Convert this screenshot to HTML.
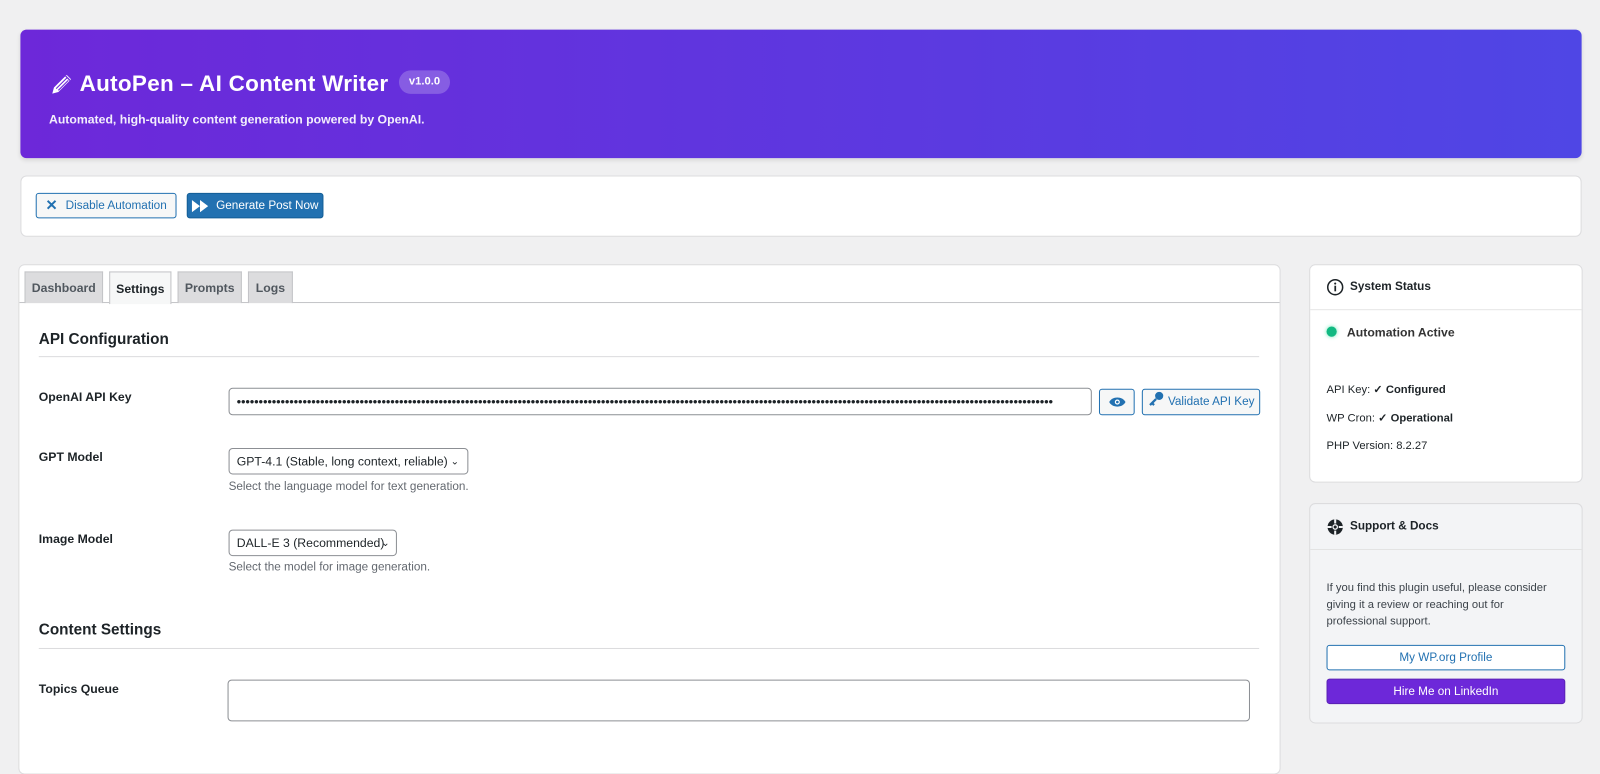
<!DOCTYPE html>
<html><head><meta charset="utf-8"><style>
*{box-sizing:border-box;margin:0;padding:0}
body{width:1600px;height:750px;overflow:hidden;background:#f0f0f1;font-family:"Liberation Sans",sans-serif;color:#1d2327;position:relative}
#w{position:absolute;left:0;top:0;width:1568px;height:735px;transform:scale(1.0204);transform-origin:0 0}
.abs{position:absolute}
.hdr{left:20px;top:29px;width:1530px;height:126px;border-radius:6px;background:linear-gradient(90deg,#6d28d9,#4f46e5);box-shadow:0 2px 4px rgba(0,0,0,.1)}
.title{left:28px;top:40px;color:#fff;font-size:22px;font-weight:bold;display:flex;align-items:center;letter-spacing:.3px}
.badge{left:371px;top:40px;height:23px;width:50px;border-radius:12px;background:rgba(255,255,255,.22);color:#fff;font-size:11px;font-weight:bold;text-align:center;line-height:23px}
.sub{left:28px;top:81px;color:#fff;font-size:12px;font-weight:bold;opacity:.92}
.card{background:#fff;border:1px solid #dcdcde;border-radius:6px}
.btn{position:absolute;height:25px;border-radius:3px;font-size:11.5px;display:flex;align-items:center;justify-content:center;gap:8px}
.tab{position:absolute;top:266px;height:31px;background:#dcdcde;border:1px solid #c3c4c7;border-bottom:none;font-size:12px;font-weight:bold;color:#50575e;display:flex;align-items:center;justify-content:center}
.h2{position:absolute;left:38px;font-size:15px;font-weight:bold}
.hr{position:absolute;left:38px;width:1196px;height:1px;background:#dcdcde}
.lbl{position:absolute;left:38px;font-size:12px;font-weight:bold}
.inp{position:absolute;border:1px solid #8c8f94;border-radius:4px;background:#fff;font-size:12px;display:flex;align-items:center;padding-left:7px}
.desc{position:absolute;left:224px;font-size:11.5px;color:#646970}
.st{position:absolute;left:1300px;font-size:11px}
</style></head><body><div id="w">
<div class="abs hdr">
 <div class="abs title"><svg width="26" height="26" viewBox="0 0 24 24" style="margin-right:4px"><path d="M3 21l1.5-5.5L16 4l4 4L8.5 19.5z" fill="#fff"/><path d="M6.5 16.5l10-10M8.5 18l9-9" stroke="#6d28d9" stroke-width="1"/><path d="M15 5l4 4" stroke="#6d28d9" stroke-width="1.2"/></svg>AutoPen – AI Content Writer</div>
 <div class="abs badge">v1.0.0</div>
 <div class="abs sub">Automated, high-quality content generation powered by OpenAI.</div>
</div>
<div class="abs card" style="left:20px;top:172px;width:1530px;height:60px"></div>
<div class="btn" style="left:35px;top:189px;width:138px;border:1px solid #2271b1;background:#f6f7f7;color:#2271b1"><span style="font-weight:bold;font-size:14px">✕</span>Disable Automation</div>
<div class="btn" style="left:183px;top:189px;width:134px;background:#2271b1;border:1px solid #135e96;color:#fff"><svg width="16" height="12" viewBox="0 0 16 12"><path d="M0 0l8 6-8 6zM8 0l8 6-8 6z" fill="#fff"/></svg>Generate Post Now</div>

<div class="abs card" style="left:18px;top:259px;width:1237px;height:500px"></div>
<div class="abs" style="left:19px;top:296px;width:1235px;height:1px;background:#c3c4c7"></div>
<div class="tab" style="left:24px;width:77px">Dashboard</div>
<div class="tab" style="left:107px;width:61px;background:#f6f7f7;color:#1d2327;height:32px">Settings</div>
<div class="tab" style="left:174px;width:63px">Prompts</div>
<div class="tab" style="left:243px;width:44px">Logs</div>
<div class="h2" style="top:324px">API Configuration</div>
<div class="hr" style="top:349px"></div>
<div class="lbl" style="top:382px">OpenAI API Key</div>
<div class="inp" style="left:224px;top:380px;width:846px;height:27px;letter-spacing:0.1px;font-weight:bold;overflow:hidden;white-space:nowrap">••••••••••••••••••••••••••••••••••••••••••••••••••••••••••••••••••••••••••••••••••••••••••••••••••••••••••••••••••••••••••••••••••••••••••••••••••••••••••••••••••••••••••••••••••••••••••</div>
<div class="btn" style="left:1077px;top:381px;width:35px;border:1px solid #2271b1;background:#f6f7f7;color:#2271b1;height:26px"><svg width="16" height="12" viewBox="0 0 16 12"><path d="M0 6C3 0 13 0 16 6 13 12 3 12 0 6z" fill="#2271b1"/><circle cx="8" cy="6" r="2.5" fill="#fff"/><circle cx="8" cy="6" r="1.3" fill="#2271b1"/></svg></div>
<div class="btn" style="left:1119px;top:381px;width:116px;border:1px solid #2271b1;background:#f6f7f7;color:#2271b1;height:26px;gap:4px"><svg width="16" height="16" viewBox="0 0 16 16" style="margin-top:-6px"><circle cx="11" cy="5" r="4" fill="#2271b1"/><path d="M8 8L2 14M4 12l2 2" stroke="#2271b1" stroke-width="2.2"/></svg>Validate API Key</div>
<div class="lbl" style="top:441px">GPT Model</div>
<div class="inp" style="left:224px;top:439px;width:235px;height:26px">GPT-4.1 (Stable, long context, reliable)<span style="position:absolute;right:8px;font-size:10px">⌄</span></div>
<div class="desc" style="top:471px">Select the language model for text generation.</div>
<div class="lbl" style="top:521px">Image Model</div>
<div class="inp" style="left:224px;top:519px;width:165px;height:26px">DALL-E 3 (Recommended)<span style="position:absolute;right:6px;font-size:10px">⌄</span></div>
<div class="desc" style="top:550px">Select the model for image generation.</div>
<div class="h2" style="top:609px">Content Settings</div>
<div class="hr" style="top:635px"></div>
<div class="lbl" style="top:668px">Topics Queue</div>
<div class="inp" style="left:223px;top:666px;width:1002px;height:41px"></div>

<div class="abs card" style="left:1283px;top:259px;width:268px;height:214px"></div>
<div class="abs" style="left:1284px;top:303px;width:266px;height:1px;background:#e5e5e5"></div>
<svg class="abs" style="left:1300px;top:273px" width="17" height="17" viewBox="0 0 17 17"><circle cx="8.5" cy="8.5" r="7.3" fill="none" stroke="#1d2327" stroke-width="1.5"/><rect x="7.7" y="7" width="1.7" height="5.5" fill="#1d2327"/><circle cx="8.5" cy="4.9" r="1" fill="#1d2327"/></svg>
<div class="st" style="left:1323px;top:275px;font-weight:bold;font-size:11.5px">System Status</div>
<div class="abs" style="left:1300px;top:320px;width:10px;height:10px;border-radius:50%;background:#10b981;box-shadow:0 0 4px #6ee7b7"></div>
<div class="st" style="left:1320px;top:319px;font-size:12px;font-weight:bold;color:#333">Automation Active</div>
<div class="st" style="top:375px">API Key: <b>✓ Configured</b></div>
<div class="st" style="top:403px">WP Cron: <b>✓ Operational</b></div>
<div class="st" style="top:431px">PHP Version: 8.2.27</div>

<div class="abs card" style="left:1283px;top:493px;width:268px;height:216px;background:#f3f4f6"></div>
<div class="abs" style="left:1284px;top:538px;width:266px;height:1px;background:#e3e3e3"></div>
<svg class="abs" style="left:1300px;top:508px" width="17" height="17" viewBox="0 0 17 17"><circle cx="8.5" cy="8.5" r="7.5" fill="#1d2327"/><circle cx="8.5" cy="8.5" r="2.8" fill="#f3f4f6"/><circle cx="8.5" cy="8.5" r="1.5" fill="#1d2327"/><path d="M8.5 1v4M8.5 12v4M1 8.5h4M12 8.5h4" stroke="#f3f4f6" stroke-width="2"/></svg>
<div class="st" style="left:1323px;top:510px;font-weight:bold;font-size:11.5px">Support &amp; Docs</div>
<div class="st" style="top:568px;line-height:16.5px;color:#3c434a;width:225px">If you find this plugin useful, please consider giving it a review or reaching out for professional support.</div>
<div class="btn" style="left:1300px;top:632px;width:234px;border:1px solid #2271b1;background:#fff;color:#2271b1">My WP.org Profile</div>
<div class="btn" style="left:1300px;top:665px;width:234px;background:#6d28d9;color:#fff;border:1px solid #5b21b6">Hire Me on LinkedIn</div>
</div></body></html>
